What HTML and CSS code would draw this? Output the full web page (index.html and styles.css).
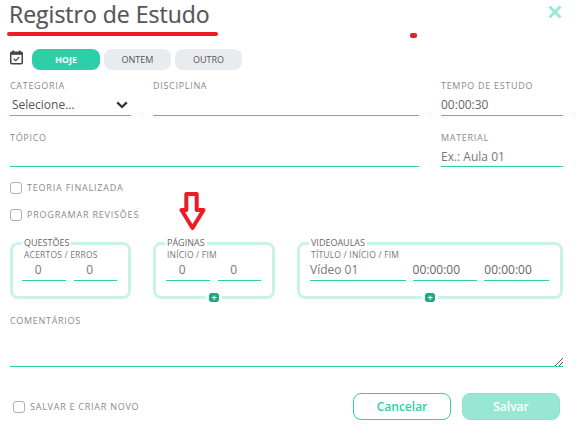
FILE: index.html
```html
<!DOCTYPE html>
<html lang="pt-BR">
<head>
    <meta charset="UTF-8">
    <title>Registro de Estudo</title>
    <link rel="stylesheet" href="styles.css">
</head>
<body>
    <div class="modal">
        <!-- Header -->
        <div class="modal-head">
            <h1>Registro de Estudo</h1>
            <svg class="close" width="14" height="14" viewBox="0 0 14 14">
                <path d="M1.5 1.5L12.5 12.5M12.5 1.5L1.5 12.5" fill="none" stroke="#9be8d4" stroke-width="3"/>
            </svg>
        </div>

        <!-- Date -->
        <div class="date-row">
            <svg class="cal" width="13" height="15" viewBox="0 0 14 16">
                <path d="M3.5 0.5V3M10.5 0.5V3" stroke="#444" stroke-width="2" fill="none"/>
                <rect x="0.8" y="2.3" width="12.4" height="12.4" rx="1.2" fill="none" stroke="#444" stroke-width="1.6"/>
                <rect x="0.8" y="2.3" width="12.4" height="2.8" fill="#444"/>
                <path d="M4 9.4L6.2 11.5L10 7.6" fill="none" stroke="#444" stroke-width="1.3"/>
            </svg>
            <button class="pill active">HOJE</button>
            <button class="pill">ONTEM</button>
            <button class="pill">OUTRO</button>
        </div>

        <!-- Main fields -->
        <div class="fields">
            <div class="field">
                <label>CATEGORIA</label>
                <div class="input select">
                    <span>Selecione...</span>
                    <svg width="12" height="8" viewBox="0 0 12 8">
                        <path d="M1.2 1.4L6 6L10.8 1.4" fill="none" stroke="#333" stroke-width="2.2"/>
                    </svg>
                </div>
            </div>
            <div class="field">
                <label>DISCIPLINA</label>
                <div class="input"></div>
            </div>
            <div class="field">
                <label>TEMPO DE ESTUDO</label>
                <div class="input">00:00:30</div>
            </div>
            <div class="field field-low span-2">
                <label>TÓPICO</label>
                <div class="input"></div>
            </div>
            <div class="field field-low">
                <label>MATERIAL</label>
                <div class="input placeholder">Ex.: Aula 01</div>
            </div>
        </div>

        <!-- Checks -->
        <div class="checks">
            <div class="check"><span class="box"></span>TEORIA FINALIZADA</div>
            <div class="check"><span class="box"></span>PROGRAMAR REVISÕES</div>
        </div>

        <!-- Groups -->
        <div class="groups">
            <fieldset class="group group-first">
                <legend>QUESTÕES</legend>
                <div class="hint">ACERTOS / ERROS</div>
                <div class="group-inputs">
                    <div class="num">0</div>
                    <div class="num">0</div>
                </div>
            </fieldset>
            <fieldset class="group">
                <legend>PÁGINAS</legend>
                <div class="hint">INÍCIO / FIM</div>
                <div class="group-inputs">
                    <div class="num">0</div>
                    <div class="num">0</div>
                </div>
                <span class="plus">+</span>
            </fieldset>
            <fieldset class="group group-video">
                <legend>VIDEOAULAS</legend>
                <div class="hint">TÍTULO / INÍCIO / FIM</div>
                <div class="group-inputs">
                    <div class="num title">Vídeo 01</div>
                    <div class="num time">00:00:00</div>
                    <div class="num time">00:00:00</div>
                </div>
                <span class="plus">+</span>
            </fieldset>
        </div>

        <!-- Comments -->
        <div class="comments">
            <label>COMENTÁRIOS</label>
            <div class="textarea">
                <svg class="grip" width="8" height="8" viewBox="0 0 8 8">
                    <path d="M0 8L8 0M4 8L8 4" stroke="#555" stroke-width="1" fill="none"/>
                </svg>
            </div>
        </div>

        <!-- Footer -->
        <div class="modal-foot">
            <div class="check foot-check"><span class="box"></span>SALVAR E CRIAR NOVO</div>
            <div class="buttons">
                <button class="btn btn-outline">Cancelar</button>
                <button class="btn btn-solid">Salvar</button>
            </div>
        </div>
    </div>

    <!-- Red marks drawn over the screenshot -->
    <div class="mark-line"></div>
    <div class="mark-dot"></div>
    <svg class="mark-arrow" width="27" height="39" viewBox="0 0 27 39">
        <path d="M7.3 2H17.7V18H24.5L13.5 36L2.5 18H7.3Z" fill="#fff" stroke="#ed1c24" stroke-width="4" stroke-linejoin="round"/>
    </svg>
</body>
</html>
```

FILE: styles.css
```css
* {
    box-sizing: border-box;
}
body {
    font-family: 'Open Sans', sans-serif;
    background-color: #fff;
    margin: 0;
    color: #555;
    overflow: hidden;
}
.modal {
    width: 586px;
    height: 444px;
    padding: 0 23px 0 10px;
}
.modal-head {
    height: 44px;
    display: flex;
    justify-content: space-between;
}
h1 {
    margin: 0 0 0 -1px;
    font-size: 23px;
    line-height: 28px;
    font-weight: 400;
    color: #555;
    -webkit-text-stroke: 0.2px #555;
}
.close {
    margin: 5px 1px 0 0;
}
.date-row {
    height: 26px;
    padding-top: 5px;
    display: flex;
    align-items: center;
    gap: 4px;
}
.cal {
    margin-right: 5px;
    margin-top: -4px;
}
.pill {
    width: 67px;
    height: 21px;
    border: none;
    border-radius: 8px;
    background: #e9ecef;
    color: #555;
    font-family: inherit;
    font-size: 9px;
    padding: 0;
}
.pill.active {
    width: 68px;
    background: #2ecfa8;
    color: #fff;
    font-weight: 700;
}
.fields {
    display: grid;
    grid-template-columns: 121px 266px 122px;
    column-gap: 22px;
    row-gap: 16px;
    margin-top: 10px;
}
.span-2 {
    grid-column: span 2;
}
label, .check {
    display: block;
    font-size: 9px;
    line-height: 12px;
    letter-spacing: 0.7px;
    color: #8a8a8a;
}
.input {
    height: 22px;
    margin-top: 2px;
    padding-top: 1px;
    font-size: 12px;
    line-height: 20px;
    color: #666;
    border-bottom: 1px solid #2ecfa8;
    display: flex;
    justify-content: space-between;
    align-items: center;
}
.field-low .input {
    margin-top: 1px;
    padding-top: 3px;
}
.input.placeholder {
    color: #777;
}
.select {
    padding-left: 2px;
    padding-right: 3px;
    color: #555;
}
.checks {
    margin-top: 14px;
    display: flex;
    flex-direction: column;
    gap: 13px;
}
.check {
    display: flex;
    align-items: center;
    gap: 5px;
    height: 14px;
    letter-spacing: 0.8px;
}
.box {
    width: 12px;
    height: 12px;
    border: 1px solid #a8b2ba;
    border-radius: 3px;
    background: #fff;
}
.groups {
    margin-top: 15px;
    display: grid;
    grid-template-columns: 121px 122px 266px;
    column-gap: 22px;
}
.group {
    position: relative;
    height: 62px;
    margin: 0;
    padding: 0 11px;
    min-width: 0;
    border: 3px solid #c9f2e8;
    border-radius: 8px;
}
.group legend {
    padding: 0 2px;
    margin-left: -2px;
    font-size: 9px;
    line-height: 12px;
    color: #666;
}
.hint {
    font-size: 8.5px;
    line-height: 11px;
    letter-spacing: 0.2px;
    color: #777;
}
.group-inputs {
    display: flex;
    gap: 8px;
    margin-left: -1px;
}
.group-first .group-inputs {
    margin-left: -2px;
}
.num {
    width: 44px;
    height: 21px;
    padding-right: 11px;
    font-size: 12px;
    line-height: 20px;
    text-align: center;
    color: #777;
    border-bottom: 1px solid #2ecfa8;
}
.group-video .group-inputs {
    gap: 7px;
}
.num.title {
    width: 96px;
    padding-right: 0;
    text-align: left;
}
.num.time {
    width: 65px;
    padding-right: 0;
    text-align: left;
    color: #666;
}
.plus {
    position: absolute;
    left: 50%;
    bottom: -6px;
    width: 10px;
    height: 9px;
    margin-left: -5px;
    outline: 3px solid #fff;
    border-radius: 2px;
    background: #1fa787;
    color: #fff;
    font-size: 9px;
    font-weight: 700;
    line-height: 9px;
    text-align: center;
}
.comments {
    margin-top: 16px;
}
.textarea {
    position: relative;
    height: 39px;
    margin-top: 1px;
    border-bottom: 1px solid #2ecfa8;
}
.grip {
    position: absolute;
    right: 0;
    bottom: 0;
}
.modal-foot {
    margin-top: 26px;
    padding-left: 3px;
    display: flex;
    justify-content: space-between;
}
.foot-check {
    height: 27px;
    letter-spacing: 0.75px;
}
.buttons {
    display: flex;
    gap: 11px;
    margin-right: 3px;
}
.btn {
    width: 98px;
    height: 27px;
    padding: 0;
    border-radius: 8px;
    font-family: inherit;
    font-size: 12px;
    font-weight: 600;
}
.btn-outline {
    background: #fff;
    border: 1px solid #2ecfa8;
    color: #2ecfa8;
}
.btn-solid {
    background: #97e7d3;
    border: 1px solid #8fe3cd;
    color: #fff;
}
.mark-line {
    position: absolute;
    left: 7px;
    top: 32px;
    width: 211px;
    height: 4px;
    border-radius: 2px;
    background: #ed1c24;
}
.mark-dot {
    position: absolute;
    left: 410px;
    top: 33px;
    width: 7px;
    height: 5px;
    border-radius: 2px;
    background: #ed1c24;
}
.mark-arrow {
    position: absolute;
    left: 179px;
    top: 192px;
}
```
